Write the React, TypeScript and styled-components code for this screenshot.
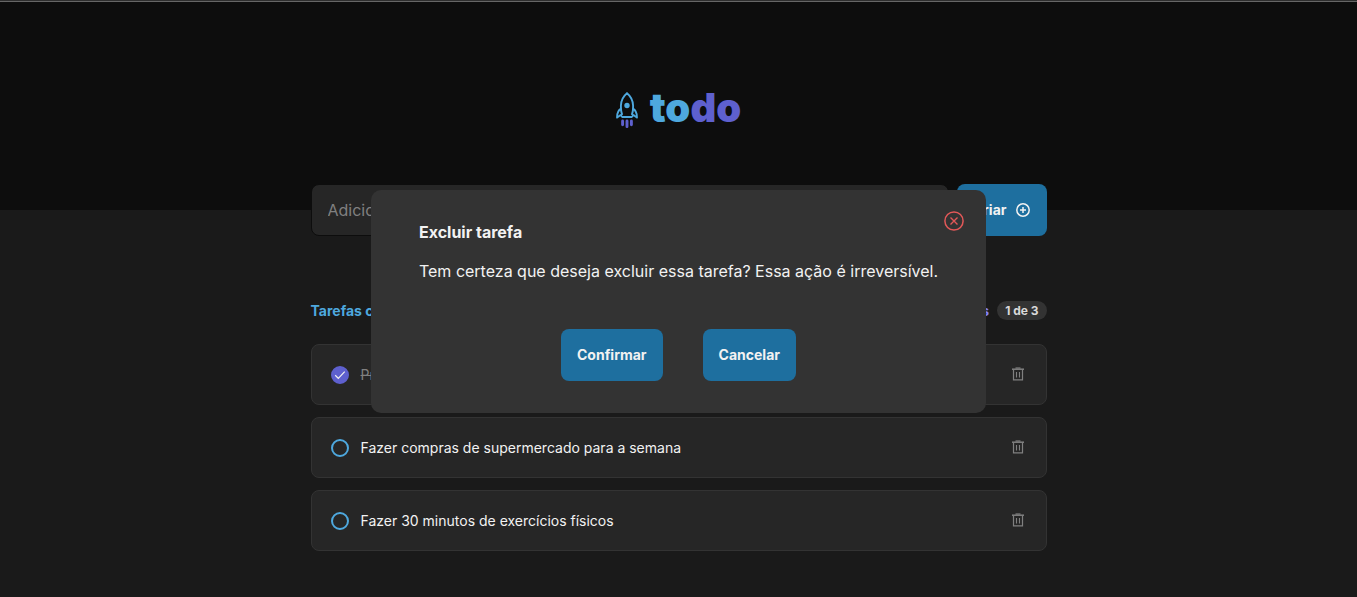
import React, { useState } from 'react';
import styled, { createGlobalStyle } from 'styled-components';

const GlobalStyle = createGlobalStyle`
  * { box-sizing: border-box; margin: 0; padding: 0; }
  body {
    background: #1a1a1a;
    color: #f2f2f2;
    font-family: Inter, sans-serif;
    font-size: 16px;
    -webkit-font-smoothing: antialiased;
  }
  input, button { font-family: inherit; }
  button { cursor: pointer; }
`;

const Header = styled.header`
  display: flex;
  align-items: center;
  justify-content: center;
  height: 210px;
  padding-top: 9px;
  background: #0d0d0d;
  border-top: 1px solid #2e2e2e;
  box-shadow: inset 0 1px 0 #666666;
`;

const Logo = styled.h1`
  display: flex;
  align-items: flex-start;
  gap: 12px;
  font-size: 40px;
  line-height: 32px;
  font-weight: 900;
`;

const LogoPart = styled.span<{ $color: string }>`
  color: ${({ $color }) => $color};
`;

const Container = styled.main`
  width: 100%;
  max-width: 736px;
  margin: -26px auto 0;
`;

const Form = styled.form`
  display: flex;
  gap: 8px;
`;

const TextField = styled.input`
  flex: 1;
  min-width: 0;
  height: 52px;
  padding: 0 16px;
  border: 1px solid #0d0d0d;
  border-radius: 8px;
  background: #262626;
  color: #f2f2f2;
  font-size: 16px;
  &::placeholder { color: #808080; }
`;

const Button = styled.button`
  display: flex;
  align-items: center;
  gap: 8px;
  height: 52px;
  padding: 0 16px 1px;
  border: 0;
  border-radius: 8px;
  background: #1e6f9f;
  color: #f2f2f2;
  font-size: 14px;
  font-weight: 700;
`;

const Summary = styled.div`
  display: flex;
  justify-content: space-between;
  margin: 65px 0 23px;
`;

const Counter = styled.p<{ $color: string }>`
  display: flex;
  align-items: flex-start;
  gap: 8px;
  color: ${({ $color }) => $color};
  font-size: 14px;
  line-height: 20px;
  font-weight: 700;
`;

const Badge = styled.span`
  padding: 2px 8px;
  border-radius: 999px;
  background: #333333;
  color: #d9d9d9;
  font-size: 12px;
  line-height: 15px;
`;

const TaskList = styled.ul`
  display: flex;
  flex-direction: column;
  gap: 12px;
  list-style: none;
`;

const TaskItem = styled.li`
  display: flex;
  align-items: center;
  gap: 12px;
  padding: 18px 16px 17px 19px;
  border: 1px solid #333333;
  border-radius: 8px;
  background: #262626;
`;

const CheckBox = styled.span`
  display: grid;
  place-items: center;
  > * { grid-area: 1 / 1; }
  svg { pointer-events: none; }
`;

const Tick = styled.input`
  appearance: none;
  width: 18px;
  height: 18px;
  border: 2px solid #4ea8de;
  border-radius: 50%;
  cursor: pointer;
  &:checked { border-color: #5e60ce; background: #5e60ce; }
`;

const TaskLabel = styled.label<{ $done: boolean }>`
  flex: 1;
  font-size: 14px;
  line-height: 20px;
  color: ${({ $done }) => ($done ? '#808080' : '#f2f2f2')};
  text-decoration: ${({ $done }) => ($done ? 'line-through' : 'none')};
`;

const IconButton = styled.button`
  display: grid;
  place-items: center;
  width: 24px;
  height: 24px;
  border: 0;
  background: transparent;
  color: #808080;
`;

const RemoveButton = styled(IconButton)`
  padding-bottom: 2px;
`;

const Overlay = styled.div`
  position: fixed;
  inset: 0;
  display: flex;
  align-items: center;
  justify-content: center;
  padding-top: 6px;
`;

const Modal = styled.section`
  position: relative;
  padding: 32px 48px;
  border-radius: 10px;
  background: #333333;
`;

const CloseButton = styled(IconButton)`
  position: absolute;
  top: 19px;
  right: 20px;
  color: #e25858;
`;

const ModalTitle = styled.h2`
  font-size: 16px;
  line-height: 20px;
  font-weight: 700;
`;

const ModalText = styled.p`
  margin-top: 19px;
  line-height: 20px;
`;

const ModalActions = styled.div`
  display: flex;
  justify-content: center;
  gap: 40px;
  margin-top: 48px;
`;

const RocketIcon = () => (
  <svg width="22" height="36" viewBox="0 0 22 36" fill="none" aria-hidden="true">
    <path
      d="M11 1.200C7.200 4.200 5 9 4.900 13.800L5 17M11 1.200C14.800 4.200 17 9 17.100 13.800L17 17M5 16.600C2.200 18.400 0.900 20.500 1.100 25.600L4.600 23L6.200 25H15.800L17.400 23L20.900 25.600C21.100 20.500 19.800 18.400 17 16.600M5 16.600C5 19 5.400 20.600 6 22.200M17 16.600C17 19 16.600 20.600 16 22.200"
      stroke="#4ea8de"
      strokeWidth="1.900"
      strokeLinejoin="round"
      strokeLinecap="round"
    />
    <circle cx="11" cy="13.500" r="2.700" fill="#4ea8de" />
    <path d="M6.600 29V32.800M11 29V34.600M15.400 29V32.800" stroke="#5e60ce" strokeWidth="2.900" strokeLinecap="round" />
  </svg>
);

const PlusCircleIcon = () => (
  <svg width="16" height="16" viewBox="0 0 16 16" fill="none" stroke="currentColor" aria-hidden="true">
    <circle cx="8" cy="8" r="6.200" strokeWidth="1.500" />
    <path d="M8 5V11M5 8H11" strokeWidth="1.500" />
  </svg>
);

const CloseIcon = () => (
  <svg width="20" height="20" viewBox="0 0 20 20" fill="none" stroke="currentColor" aria-hidden="true">
    <circle cx="10" cy="10" r="9.100" strokeWidth="1.500" />
    <path d="M6.500 6.500L13.500 13.500M13.500 6.500L6.500 13.500" strokeWidth="1.400" />
  </svg>
);

const TrashIcon = () => (
  <svg width="12" height="14" viewBox="0 0 12 14" fill="none" stroke="currentColor" aria-hidden="true">
    <path d="M3.500 1H8.500" strokeWidth="1.200" />
    <path d="M0 2.200H12" strokeWidth="1.500" />
    <path d="M1.500 2.500V12.900H10.500V2.500" strokeWidth="1.200" />
    <path d="M4.500 5V10.500M7.500 5V10.500" strokeWidth="1.100" />
  </svg>
);

const CheckIcon = () => (
  <svg width="12" height="10" viewBox="0 0 12 10" fill="none" aria-hidden="true">
    <path d="M1.200 5.300L4.300 8.300L10.700 1.700" stroke="#f2f2f2" strokeWidth="1.200" />
  </svg>
);

const initialTasks = [
  { id: 1, title: 'Preparar apresentação do projeto', done: true },
  { id: 2, title: 'Fazer compras de supermercado para a semana', done: false },
  { id: 3, title: 'Fazer 30 minutos de exercícios físicos', done: false },
];

export default function App() {
  const [tasks, setTasks] = useState(initialTasks);
  const [pendingId, setPendingId] = useState<number | null>(1);
  const [draft, setDraft] = useState('');

  const addTask = (event: React.FormEvent) => {
    event.preventDefault();
    if (!draft.trim()) return;
    setTasks([...tasks, { id: Date.now(), title: draft.trim(), done: false }]);
    setDraft('');
  };

  const toggle = (id: number) =>
    setTasks(tasks.map((task) => (task.id === id ? { ...task, done: !task.done } : task)));

  const close = () => setPendingId(null);

  const confirm = () => {
    setTasks(tasks.filter((task) => task.id !== pendingId));
    close();
  };

  const doneCount = tasks.filter((task) => task.done).length;

  return (
    <>
      <GlobalStyle />
      <Header>
        <Logo>
          <RocketIcon />
          <span>
            <LogoPart $color="#4ea8de">to</LogoPart>
            <LogoPart $color="#5e60ce">do</LogoPart>
          </span>
        </Logo>
      </Header>
      <Container>
        <Form onSubmit={addTask}>
          <TextField
            aria-label="Nova tarefa"
            placeholder="Adicione uma nova tarefa"
            value={draft}
            onChange={(event) => setDraft(event.target.value)}
          />
          <Button type="submit">
            Criar
            <PlusCircleIcon />
          </Button>
        </Form>
        <Summary>
          <Counter $color="#4ea8de">
            Tarefas criadas <Badge>{tasks.length}</Badge>
          </Counter>
          <Counter $color="#8284fa">
            Concluídas <Badge>{doneCount} de {tasks.length}</Badge>
          </Counter>
        </Summary>
        <TaskList>
          {tasks.map((task) => (
            <TaskItem key={task.id}>
              <CheckBox>
                <Tick
                  type="checkbox"
                  id={`task-${task.id}`}
                  checked={task.done}
                  onChange={() => toggle(task.id)}
                />
                {task.done && <CheckIcon />}
              </CheckBox>
              <TaskLabel htmlFor={`task-${task.id}`} $done={task.done}>
                {task.title}
              </TaskLabel>
              <RemoveButton type="button" aria-label="Excluir tarefa" onClick={() => setPendingId(task.id)}>
                <TrashIcon />
              </RemoveButton>
            </TaskItem>
          ))}
        </TaskList>
      </Container>
      {pendingId !== null && (
        <Overlay>
          <Modal role="dialog" aria-modal="true" aria-labelledby="modal-title">
            <CloseButton type="button" aria-label="Fechar" onClick={close}>
              <CloseIcon />
            </CloseButton>
            <ModalTitle id="modal-title">Excluir tarefa</ModalTitle>
            <ModalText>Tem certeza que deseja excluir essa tarefa? Essa ação é irreversível.</ModalText>
            <ModalActions>
              <Button type="button" onClick={confirm}>Confirmar</Button>
              <Button type="button" onClick={close}>Cancelar</Button>
            </ModalActions>
          </Modal>
        </Overlay>
      )}
    </>
  );
}
